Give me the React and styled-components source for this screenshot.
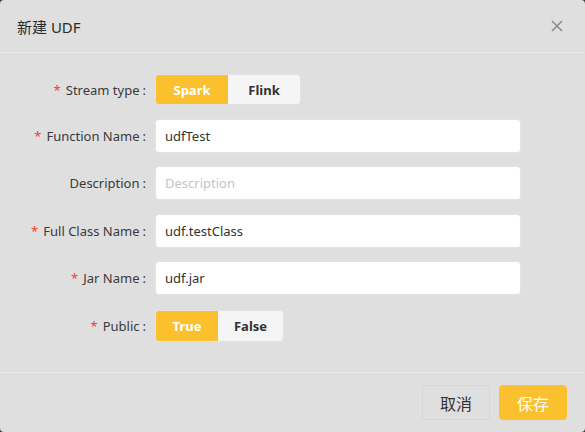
import React, {useState} from "react";
import styled, {createGlobalStyle} from "styled-components";

const GlobalStyle = createGlobalStyle`
  html, body {
    margin: 0;
    padding: 0;
    background: #3a3a3a;
  }
  * {
    box-sizing: border-box;
  }
`;

const Modal = styled.div`
  width: 585px;
  height: 432px;
  background: #dfdfdf;
  border-radius: 4px;
  display: flex;
  flex-direction: column;
  font-family: "Noto Sans", "Noto Sans CJK SC", sans-serif;
  color: #333;
`;

const Header = styled.div`
  height: 53px;
  display: flex;
  align-items: center;
  justify-content: space-between;
  padding: 0 21px 0 17px;
  border-bottom: 1px solid #ebebeb;
`;

const Title = styled.div`
  font-size: 15px;
  color: #2b2b2b;
`;

const Close = styled.button`
  background: none;
  border: none;
  padding: 0;
  width: 14px;
  height: 14px;
  cursor: pointer;
  display: flex;
`;

const Body = styled.div`
  flex: 1;
  padding: 21px 0 0;
  display: flex;
  flex-direction: column;
  gap: 13px;
  border-bottom: 1px solid #ebebeb;
`;

const Row = styled.div`
  display: flex;
  align-items: center;
  margin-top: ${({$extra}) => $extra || 0}px;
`;

const Label = styled.label`
  width: 155px;
  padding-right: 9px;
  text-align: right;
  font-size: 13px;
  color: #3a3a3a;
  white-space: nowrap;
  &::after {
    content: ":";
    margin-left: 3px;
  }
`;

const Star = styled.span`
  color: #f04134;
  margin-right: 5px;
`;

const Input = styled.input`
  width: 366px;
  height: 34px;
  border: 1px solid #e3e3e3;
  border-radius: 4px;
  background: #fff;
  padding: 0 9px;
  font-size: 13px;
  font-family: inherit;
  color: #333;
  outline: none;
  &::placeholder {
    color: #c4c4c4;
  }
`;

const Segment = styled.div`
  display: flex;
  border-radius: 4px;
  overflow: hidden;
  border: 1px solid #e2e2e2;
  height: ${({$h}) => $h}px;
`;

const SegButton = styled.button`
  width: ${({$w}) => $w}px;
  border: none;
  font-family: inherit;
  font-size: 13px;
  font-weight: 700;
  cursor: pointer;
  background: ${({$active}) => ($active ? "#fbc02d" : "#f5f5f5")};
  color: ${({$active}) => ($active ? "#fff" : "#333")};
`;

const Footer = styled.div`
  height: 59px;
  display: flex;
  align-items: center;
  justify-content: flex-end;
  gap: 9px;
  padding: 0 18px 0 0;
`;

const Button = styled.button`
  width: 68px;
  height: 35px;
  border-radius: 4px;
  font-family: inherit;
  font-size: 16px;
  cursor: pointer;
  border: 1px solid ${({$primary}) => ($primary ? "#fbc02d" : "#d6d6d6")};
  background: ${({$primary}) => ($primary ? "#fbc02d" : "#dfdfdf")};
  color: ${({$primary}) => ($primary ? "#fff" : "#333")};
`;

const Toggle = ({options, value, onChange, widths, height}) => (
  <Segment $h={height}>
    {options.map((opt, i) => (
      <SegButton key={opt} $w={widths[i]} $active={value === opt} onClick={() => onChange(opt)}>
        {opt}
      </SegButton>
    ))}
  </Segment>
);

const Field = ({label, required, children, extra}) => (
  <Row $extra={extra}>
    <Label>
      {required && <Star>*</Star>}
      {label}
    </Label>
    {children}
  </Row>
);

export default function App() {
  const [stream, setStream] = useState("Spark");
  const [pub, setPub] = useState("True");

  return (
    <>
      <GlobalStyle/>
      <Modal>
        <Header>
          <Title>新建 UDF</Title>
          <Close aria-label="close">
            <svg width="14" height="14" viewBox="0 0 14 14">
              <path d="M2 2L12 12M12 2L2 12" stroke="#8c8c8c" strokeWidth="1.6" fill="none"/>
            </svg>
          </Close>
        </Header>
        <Body>
          <Field label="Stream type" required>
            <Toggle options={["Spark", "Flink"]} value={stream} onChange={setStream} widths={[72, 72]} height={31}/>
          </Field>
          <Field label="Function Name" required extra={1}>
            <Input defaultValue="udfTest"/>
          </Field>
          <Field label="Description">
            <Input placeholder="Description"/>
          </Field>
          <Field label="Full Class Name" required extra={1}>
            <Input defaultValue="udf.testClass"/>
          </Field>
          <Field label="Jar Name" required>
            <Input defaultValue="udf.jar"/>
          </Field>
          <Field label="Public" required extra={2}>
            <Toggle options={["True", "False"]} value={pub} onChange={setPub} widths={[62, 65]} height={32}/>
          </Field>
        </Body>
        <Footer>
          <Button>取消</Button>
          <Button $primary>保存</Button>
        </Footer>
      </Modal>
    </>
  );
}
